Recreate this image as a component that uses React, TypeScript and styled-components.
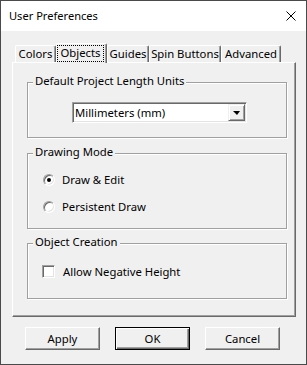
import React from "react";
import styled, { createGlobalStyle } from "styled-components";

const GlobalStyle = createGlobalStyle`
  html, body { margin: 0; padding: 0; background: #f0f0f0; }
  body {
    font-family: "Noto Sans", "Segoe UI", sans-serif;
    font-size: 11.3px;
    color: #000;
  }
  * { box-sizing: border-box; }
`;

const Window = styled.div`
  width: 307px;
  height: 365px;
  border: 1px solid #4a4a4a;
  background: #f0f0f0;
  display: flex;
  flex-direction: column;
`;

const TitleBar = styled.div`
  height: 30px;
  flex: none;
  background: #fff;
  display: flex;
  align-items: center;
  justify-content: space-between;
  padding: 0 10px 0 8px;
`;

const Title = styled.span`
  font-size: 11.1px;
  line-height: 16px;
`;

const Body = styled.div`
  flex: 1;
  padding: 12px 10px 0 11px;
  display: flex;
  flex-direction: column;
`;

const TabRow = styled.div`
  display: flex;
  align-items: flex-end;
  height: 19px;
  margin-left: 3px;
  position: relative;
  z-index: 1;
`;

const Tab = styled.div<{ $w: number; $active?: boolean }>`
  width: ${(p) => p.$w}px;
  height: ${(p) => (p.$active ? 20 : 17)}px;
  margin-bottom: ${(p) => (p.$active ? -1 : 0)}px;
  background: #f0f0f0;
  border-top: 1px solid #fff;
  border-left: 1px solid #fff;
  border-right: 1px solid #696969;
  box-shadow: inset -1px 0 0 #a0a0a0;
  border-radius: 2px 2px 0 0;
  display: flex;
  align-items: flex-start;
  justify-content: center;
  white-space: nowrap;
  padding: ${(p) => (p.$active ? "1px 2px 2px 0" : "0")};
  line-height: 16px;
`;

const FocusBox = styled.span`
  flex: 1;
  height: 17px;
  border: 1px dotted #000;
  display: flex;
  justify-content: center;
  line-height: 14px;
`;

const Panel = styled.div`
  border-style: solid;
  border-width: 1px;
  border-color: #fff #696969 #696969 #fff;
  box-shadow: inset -1px -1px 0 #a0a0a0;
  padding: 19px 8px 17px 14px;
  display: flex;
  flex-direction: column;
`;

const Group = styled.div<{ $pt: number; $pb: number; $pl: number; $mt?: number }>`
  position: relative;
  border: 1px solid #a0a0a0;
  box-shadow: inset 1px 1px 0 #fff, 1px 1px 0 #fff;
  padding: ${(p) => `${p.$pt}px 0 ${p.$pb}px ${p.$pl}px`};
  margin-top: ${(p) => p.$mt ?? 0}px;
  display: flex;
  flex-direction: column;
  gap: 10px;
`;

const Legend = styled.span`
  position: absolute;
  top: -10px;
  left: 5px;
  padding: 0 2px;
  background: #f0f0f0;
  line-height: 16px;
  white-space: nowrap;
`;

const Select = styled.div`
  width: 175px;
  height: 21px;
  border-style: solid;
  border-width: 1px;
  border-color: #a0a0a0 #fff #fff #a0a0a0;
  box-shadow: inset 1px 1px 0 #696969, inset -1px -1px 0 #e3e3e3;
  background: #fff;
  padding: 1px 1px 1px 2px;
  display: flex;
  align-items: center;
`;

const SelectText = styled.span`
  flex: 1;
  line-height: 16px;
  padding-top: 1px;
`;

const DropButton = styled.div`
  width: 17px;
  height: 17px;
  background: #f0f0f0;
  border-style: solid;
  border-width: 1px;
  border-color: #f0f0f0 #696969 #696969 #f0f0f0;
  box-shadow: inset 1px 1px 0 #fff, inset -1px -1px 0 #a0a0a0;
  display: flex;
  align-items: center;
  justify-content: center;
`;

const Arrow = styled.span`
  width: 0;
  height: 0;
  border-left: 4px solid transparent;
  border-right: 3px solid transparent;
  border-top: 4px solid #000;
  margin-top: 1px;
`;

const OptionRow = styled.label<{ $gap: number }>`
  display: flex;
  align-items: center;
  height: 17px;
  gap: ${(p) => p.$gap}px;
  line-height: 16px;
`;

const Radio = styled.span<{ $checked?: boolean }>`
  width: 12px;
  height: 12px;
  border-radius: 50%;
  border: 1px solid;
  border-color: #a0a0a0 #fff #fff #a0a0a0;
  box-shadow: inset 1px 1px 0 #696969, inset -1px -1px 0 #e3e3e3;
  background: #fff;
  display: flex;
  align-items: center;
  justify-content: center;
  &::after {
    content: "";
    display: ${(p) => (p.$checked ? "block" : "none")};
    width: 4px;
    height: 4px;
    border-radius: 50%;
    background: #000;
  }
`;

const Checkbox = styled.span`
  width: 13px;
  height: 13px;
  border: 1px solid;
  border-color: #a0a0a0 #fff #fff #a0a0a0;
  box-shadow: inset 1px 1px 0 #696969, inset -1px -1px 0 #e3e3e3;
  background: #fff;
`;

const ButtonRow = styled.div`
  display: flex;
  gap: 15px;
  margin: 10px 0 0 13px;
`;

const Button = styled.div<{ $default?: boolean }>`
  width: 75px;
  height: 23px;
  background: #f0f0f0;
  display: flex;
  align-items: center;
  justify-content: center;
  line-height: 16px;
  ${(p) =>
    p.$default
      ? `border: 1px solid #000;
         box-shadow: inset 1px 1px 0 #fff, inset -1px -1px 0 #696969, inset -2px -2px 0 #a0a0a0;`
      : `border-style: solid; border-width: 1px;
         border-color: #fff #696969 #696969 #fff;
         box-shadow: inset -1px -1px 0 #a0a0a0;`}
`;

const CloseIcon = () => (
  <svg width="10" height="10" viewBox="0 0 10 10">
    <path d="M0.5 0.5 L9.5 9.5 M9.5 0.5 L0.5 9.5" stroke="#000" strokeWidth="1" fill="none" />
  </svg>
);

const tabs = [
  { label: "Colors", w: 41 },
  { label: "Objects", w: 51, active: true },
  { label: "Guides", w: 42 },
  { label: "Spin Buttons", w: 72 },
  { label: "Advanced", w: 60 },
];

export default function App() {
  return (
    <>
      <GlobalStyle />
      <Window>
        <TitleBar>
          <Title>User Preferences</Title>
          <CloseIcon />
        </TitleBar>
        <Body>
          <TabRow>
            {tabs.map((t) => (
              <Tab key={t.label} $w={t.w} $active={t.active}>
                {t.active ? <FocusBox>{t.label}</FocusBox> : <span>{t.label}</span>}
              </Tab>
            ))}
          </TabRow>
          <Panel>
            <Group $pt={19} $pb={14} $pl={44}>
              <Legend>Default Project Length Units</Legend>
              <Select>
                <SelectText>Millimeters (mm)</SelectText>
                <DropButton>
                  <Arrow />
                </DropButton>
              </Select>
            </Group>
            <Group $pt={17} $pb={13} $pl={15} $mt={15}>
              <Legend>Drawing Mode</Legend>
              <OptionRow $gap={7}>
                <Radio $checked />
                Draw &amp; Edit
              </OptionRow>
              <OptionRow $gap={7}>
                <Radio />
                Persistent Draw
              </OptionRow>
            </Group>
            <Group $pt={19} $pb={18} $pl={14} $mt={14}>
              <Legend>Object Creation</Legend>
              <OptionRow $gap={8}>
                <Checkbox />
                Allow Negative Height
              </OptionRow>
            </Group>
          </Panel>
          <ButtonRow>
            <Button>Apply</Button>
            <Button $default>OK</Button>
            <Button>Cancel</Button>
          </ButtonRow>
        </Body>
      </Window>
    </>
  );
}
